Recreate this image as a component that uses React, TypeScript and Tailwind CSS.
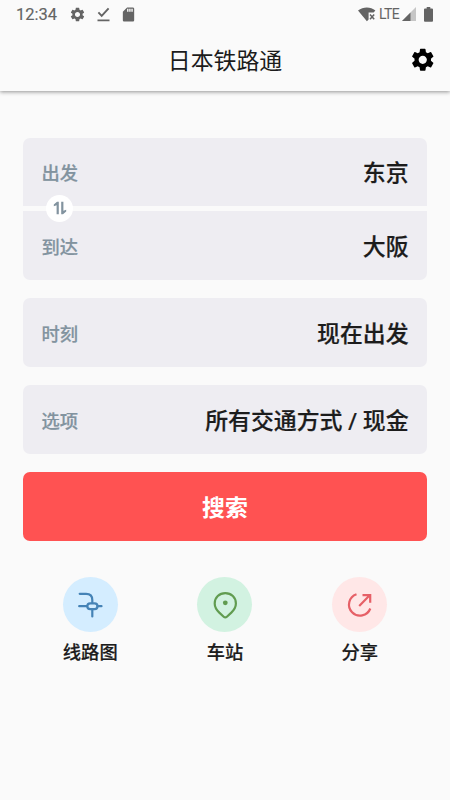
import type { ReactNode } from 'react';
import { MdSdCard, MdSettings } from 'react-icons/md';

interface Shortcut {
  label: string;
  circle: string;
  icon: ReactNode;
}

// Android status bar
function StatusBar() {
  return (
    <div className="flex h-7 items-center pl-4 pr-[17px] text-[#646464]">
      <span className="w-[42px] pt-px font-[Roboto] text-[16.500px] leading-7 [-webkit-text-stroke:0.15px]">12:34</span>
      <MdSettings className="ml-[11px] h-[17px] w-[17px]" />
      <svg className="ml-[11px] h-[15px] w-[13px]" viewBox="0 0 13 15" fill="none" stroke="currentColor" strokeWidth="1.9">
        <path d="M1.4 5.4l3.3 3.5L11.6 1.4M.5 13.4h12" />
      </svg>
      <MdSdCard className="ml-[10px] h-[17px] w-[17px]" />

      <svg className="ml-auto h-[15px] w-[18px]" viewBox="0 0 18 15">
        <path d="M0 3.4C5.3-.5 12.500-.5 17.400 3.400L15.600 5.600h-5v7L8.900 14.200z" fill="currentColor" />
        <path d="M12 7.600l4.200 4.600M16.200 7.600L12 12.200" stroke="currentColor" strokeWidth="1.500" />
      </svg>
      <span className="ml-[3px] w-[21px] font-[Roboto] text-[14px] leading-7 tracking-[-0.600px]">LTE</span>
      <svg className="ml-[2px] h-[14px] w-[14px]" viewBox="0 0 14 14" fill="currentColor">
        <path d="M14 0v14H0z" opacity="0.35" />
        <path d="M8.500 5.500V14H0z" />
      </svg>
      <svg className="ml-[8px] h-[15px] w-[9px]" viewBox="0 0 9 16" preserveAspectRatio="none" fill="currentColor">
        <path d="M2.700 0h3.600v1.700H8q1 0 1 1V15q0 .8-1 .8H1q-1 0-1-.8V2.700q0-1 1-1h1.700z" />
      </svg>
    </div>
  );
}

function Row({ label, value, className }: { label: string; value: string; className: string }) {
  return (
    <div className={`flex items-center justify-between bg-[#eeedf2] px-[18.500px] pt-[5px] ${className}`}>
      <span className="text-[18.300px] font-medium leading-7 text-[#82939f] [-webkit-text-stroke:0.2px]">{label}</span>
      <span className="text-[22.900px] font-medium leading-8 text-[#1c1c1c] [-webkit-text-stroke:0.2px]">{value}</span>
    </div>
  );
}

const shortcuts: Shortcut[] = [
  {
    label: '线路图',
    circle: 'bg-[#d4edff]',
    icon: (
      <svg className="h-[55px] w-[55px]" viewBox="0 0 55 55" fill="none" stroke="#4583b6" strokeWidth="2.200" strokeLinecap="round">
        <path d="M16.700 16.800h6.400q6.200 0 6.200 6.200v2.800M16.200 29.200h8M34.500 29.200h4M29.300 32.500v7" />
        <rect x="24.300" y="26.300" width="10.200" height="5.800" rx="2.900" />
      </svg>
    ),
  },
  {
    label: '车站',
    circle: 'bg-[#d2f2e1]',
    icon: (
      <svg className="h-[55px] w-[55px]" viewBox="0 0 55 55" fill="none" stroke="#619c50" strokeWidth="2.200">
        <path d="M28.300 16.100c-6 0-10.600 4.500-10.600 10.300 0 3.900 1.900 6.500 4.600 9.200l4.400 4.100q1.600 1.500 3.200 0l4.400-4.100c2.700-2.700 4.600-5.300 4.600-9.200 0-5.800-4.600-10.300-10.600-10.300z" />
        <circle cx="28.300" cy="25.800" r="2.400" fill="#619c50" stroke="none" />
      </svg>
    ),
  },
  {
    label: '分享',
    circle: 'bg-[#ffe7e7]',
    icon: (
      <svg className="h-[55px] w-[55px]" viewBox="0 0 55 55" fill="none" stroke="#e66067" strokeWidth="2.200">
        <path d="M24.500 17.200A11 11 0 1 0 38.300 31.500M27.200 29L37.700 18.300M30.500 18.100h7.700v7.700" />
      </svg>
    ),
  },
];

export default function App() {
  return (
    <div
      className="flex h-[800px] w-[450px] flex-col overflow-hidden bg-[#fafafa] text-[#1c1c1c]"
      style={{ fontFamily: 'Roboto, "Noto Sans CJK SC", sans-serif' }}
    >
      {/* Header */}
      <header className="h-[91px] shadow-[0_1px_4px_rgba(0,0,0,0.42)]">
        <StatusBar />
        <div className="grid h-16 grid-cols-[1fr_auto_1fr] items-center">
          <h1 className="col-start-2 pt-[4px] text-[22.900px] font-normal leading-8">日本铁路通</h1>
          <button className="mr-[14px] justify-self-end" aria-label="设置">
            <MdSettings className="h-[27.500px] w-[27.500px] text-black" />
          </button>
        </div>
      </header>

      {/* Search form */}
      <main className="flex flex-col px-[22.900px] pt-[46.500px]">
        <div className="relative flex flex-col gap-[4.600px]">
          <Row label="出发" value="东京" className="h-[68.750px] rounded-t-[7px]" />
          <Row label="到达" value="大阪" className="h-[68.750px] rounded-b-[7px]" />
          <button
            className="absolute left-[23px] top-[57px] flex h-[27.500px] w-[27.500px] items-center justify-center rounded-full bg-white"
            aria-label="交换"
          >
            <svg className="h-[14px] w-[14px]" viewBox="0 0 14 14" fill="#82939f">
              <path d="M5.800.8V13.200H3.600V4.200L.800 5.200V3.400L4 .8zM8.200 13.200V.8h2.200v9l2.800-1v1.800L10 13.200z" />
            </svg>
          </button>
        </div>
        <Row label="时刻" value="现在出发" className="mt-[18.300px] h-[68.750px] rounded-[7px]" />
        <Row label="选项" value="所有交通方式 / 现金" className="mt-[18.300px] h-[68.750px] rounded-[7px]" />
        <button className="mt-[18.300px] h-[68.750px] rounded-[7px] bg-[#ff5252] pt-[5px] text-[22.900px] font-bold leading-8 text-white">
          搜索
        </button>
      </main>

      {/* Shortcuts */}
      <nav className="mt-[36.500px] grid grid-cols-3 px-[22.900px]">
        {shortcuts.map((item) => (
          <a key={item.label} className="flex flex-col items-center">
            <span className={`h-[55px] w-[55px] rounded-full ${item.circle}`}>{item.icon}</span>
            <span className="mt-[7px] text-[18.300px] font-medium leading-7 [-webkit-text-stroke:0.2px]">{item.label}</span>
          </a>
        ))}
      </nav>
    </div>
  );
}
